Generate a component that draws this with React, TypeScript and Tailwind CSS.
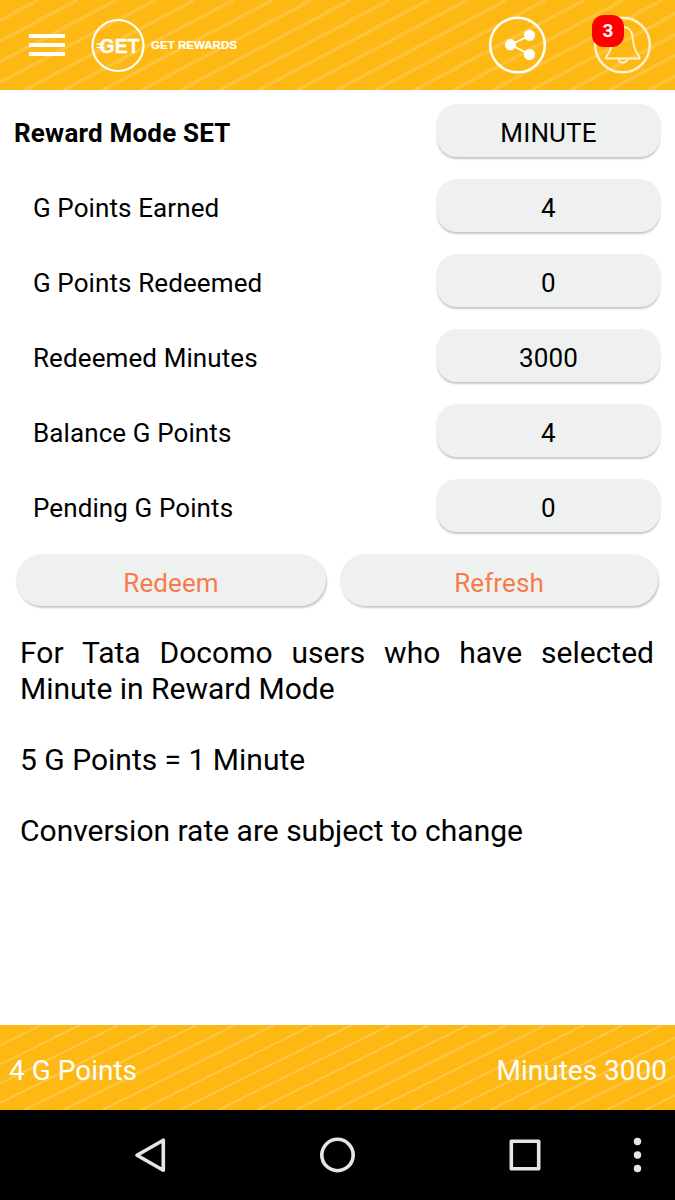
import { ReactNode } from "react";

const rows = [
  { label: "G Points Earned", value: "4" },
  { label: "G Points Redeemed", value: "0" },
  { label: "Redeemed Minutes", value: "3000" },
  { label: "Balance G Points", value: "4" },
  { label: "Pending G Points", value: "0" },
];

interface StripesProps {
  height: number;
  firstX: number;
  period: number;
  slope: number;
  strokeWidth: number;
  opacity: number;
}

// Diagonal lines behind the orange bars
function Stripes({ height, firstX, period, slope, strokeWidth, opacity }: StripesProps) {
  const run = height / slope;
  return (
    <svg className="absolute inset-0 w-full h-full" aria-hidden="true">
      {Array.from({ length: 24 }, (_, i) => {
        const x = firstX + i * period;
        return (
          <line
            key={i}
            x1={x}
            y1={0}
            x2={x - run}
            y2={height}
            stroke="white"
            strokeWidth={strokeWidth}
            strokeOpacity={opacity}
          />
        );
      })}
    </svg>
  );
}

function ValuePill({ children }: { children: ReactNode }) {
  return (
    <div className="flex h-[53px] w-[223px] items-center justify-center rounded-[20px] bg-[#eff1f1] pt-[6px] text-[26px] tracking-[0.15px] shadow-[0px_2px_2px_0px_rgba(0,0,0,0.22)]">
      {children}
    </div>
  );
}

function ActionButton({ children, className }: { children: ReactNode; className: string }) {
  return (
    <button
      className={`flex h-[52px] items-center justify-center rounded-full bg-[#eff1f1] pt-[7px] text-[26px] tracking-[0.1px] text-[#f97b4b] shadow-[1px_2px_2px_0px_rgba(0,0,0,0.22)] ${className}`}
    >
      {children}
    </button>
  );
}

export default function App() {
  return (
    <div className="flex h-[1200px] w-[675px] flex-col overflow-hidden bg-white font-['Roboto',sans-serif] text-black">
      {/* Header */}
      <header className="relative h-[90px] shrink-0 bg-[#fdb813]">
        <Stripes height={90} firstX={38.5} period={39} slope={0.53} strokeWidth={3.4} opacity={0.17} />
        <div className="relative flex h-full items-center pl-[29px] pr-[23px]">
          <button className="flex w-9 flex-col gap-[5px]" aria-label="Menu">
            <span className="h-1 bg-white" />
            <span className="h-1 bg-white" />
            <span className="h-1 bg-white" />
          </button>
          <svg className="ml-[25px] h-[56px] w-[150px]" viewBox="0 0 150 56" fill="white">
            <circle cx="28" cy="28.5" r="25.5" fill="none" stroke="white" strokeWidth="2.2" />
            <text x="9.5" y="36.3" fontFamily="Liberation Sans" fontWeight="700" fontSize="21" textLength="40" lengthAdjust="spacingAndGlyphs" stroke="white" strokeWidth="0.3">
              GET
            </text>
            <path d="M6.5 27h8M6.5 30.5h8" stroke="white" strokeWidth="1.5" />
            <text x="61" y="32" fontFamily="Liberation Sans" fontWeight="700" fontSize="11.5" textLength="86" lengthAdjust="spacingAndGlyphs" stroke="white" strokeWidth="0.2">
              GET REWARDS
            </text>
          </svg>
          <div className="ml-auto flex items-center gap-[47px]">
            <svg className="h-[58px] w-[58px]" viewBox="0 0 58 58" fill="none" stroke="white">
              <circle cx="28.5" cy="29" r="27.3" strokeWidth="2.5" />
              <path d="M41.4 19.2L21.5 28.7L41.4 38.7" strokeWidth="1.7" />
              <g fill="white" stroke="none">
                <circle cx="21.5" cy="28.7" r="5.6" />
                <circle cx="40.5" cy="19.3" r="5.6" />
                <circle cx="40.5" cy="38.5" r="5.6" />
              </g>
            </svg>
            <div className="relative">
              <svg className="h-[58px] w-[58px]" viewBox="0 0 58 58" fill="none" stroke="#fff1d0">
                <circle cx="28.5" cy="29" r="27.3" strokeWidth="2.5" />
                <path
                  d="M12.2 42.5H45.5C46.3 41 44.7 39.6 43.3 37.6C39.7 32.5 39.2 27 38.7 21.5C38.2 15 34.5 11 28.9 11C23.2 11 19.5 15 19 21.5C18.5 27 18 32.5 14.4 37.6C13 39.6 11.4 41 12.2 42.5Z"
                  strokeWidth="1.9"
                />
                <path d="M24.7 42.8C25 48 32.7 48 33 42.8" strokeWidth="1.9" />
              </svg>
              <span className="absolute -left-[2px] -top-[1px] flex h-8 w-8 items-center justify-center rounded-[12px] bg-[#fe0000] pt-px text-[19px] font-bold text-white">
                3
              </span>
            </div>
          </div>
        </div>
      </header>

      {/* Points */}
      <main className="flex-1">
        <div className="pt-[3px] text-[26px] tracking-[0.1px]">
          <div className="flex h-[75px] items-center justify-between pl-[14px] pr-[15px]">
            <span className="pt-[6px] font-bold tracking-[0.2px]">Reward Mode SET</span>
            <ValuePill>MINUTE</ValuePill>
          </div>
          {rows.map((row) => (
            <div key={row.label} className="flex h-[75px] items-center justify-between pl-[33px] pr-[15px]">
              <span className="pt-[6px]">{row.label}</span>
              <ValuePill>{row.value}</ValuePill>
            </div>
          ))}
        </div>

        <div className="mt-[11px] flex gap-[14px] pl-4">
          <ActionButton className="w-[310px]">Redeem</ActionButton>
          <ActionButton className="w-[318px]">Refresh</ActionButton>
        </div>

        <div className="mt-[29px] w-[654px] pl-5 text-[30px] leading-[35.6px]">
          <p className="text-justify">For Tata Docomo users who have selected Minute in Reward Mode</p>
          <p className="mt-[35.6px]">5 G Points = 1 Minute</p>
          <p className="mt-[35.6px]">Conversion rate are subject to change</p>
        </div>
      </main>

      {/* Totals */}
      <footer className="relative h-[85px] shrink-0 bg-[#fdb813]">
        <Stripes height={85} firstX={41} period={38.8} slope={0.495} strokeWidth={2} opacity={0.22} />
        <div className="relative flex h-full items-center justify-between pl-[9px] pr-2 pt-[6px] text-[28px] text-white">
          <span>4 G Points</span>
          <span>Minutes 3000</span>
        </div>
      </footer>

      {/* Android navigation bar */}
      <nav className="flex h-[90px] shrink-0 items-center bg-black pl-[132px]">
        <svg className="h-10 w-9" viewBox="0 0 36 40" fill="none" stroke="#e5e5e5" strokeWidth="3.6" strokeLinejoin="round">
          <path d="M31.3 5.2V35.2L5 20.2Z" />
        </svg>
        <svg className="ml-[149px] h-10 w-10" viewBox="0 0 40 40" fill="none" stroke="#e5e5e5" strokeWidth="3.6">
          <circle cx="20.5" cy="20" r="15.7" />
        </svg>
        <svg className="ml-[148px] h-10 w-10" viewBox="0 0 40 40" fill="none" stroke="#e5e5e5" strokeWidth="3.6" strokeLinejoin="round">
          <rect x="6.3" y="6.3" width="27.4" height="27.4" />
        </svg>
        <svg className="ml-[83px] h-10 w-5" viewBox="0 0 20 40" fill="#e5e5e5">
          <circle cx="9.5" cy="6.5" r="3.7" />
          <circle cx="9.5" cy="20" r="3.7" />
          <circle cx="9.5" cy="33.5" r="3.7" />
        </svg>
      </nav>
    </div>
  );
}
